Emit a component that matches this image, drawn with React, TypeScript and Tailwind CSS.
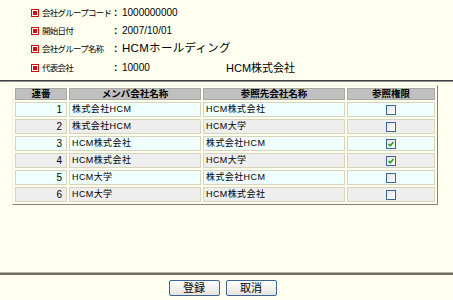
const rows = [
  { no: 1, member: "株式会社HCM", target: "HCM株式会社", checked: false },
  { no: 2, member: "株式会社HCM", target: "HCM大学", checked: false },
  { no: 3, member: "HCM株式会社", target: "株式会社HCM", checked: true },
  { no: 4, member: "HCM株式会社", target: "HCM大学", checked: true },
  { no: 5, member: "HCM大学", target: "株式会社HCM", checked: false },
  { no: 6, member: "HCM大学", target: "HCM株式会社", checked: false },
];

const Mark = () => (
  <span className="inline-flex shrink-0 items-center justify-center w-[8px] h-[8px] border border-[#d01010] bg-white mr-[3px]">
    <span className="w-[4px] h-[4px] bg-[#d01010]" />
  </span>
);

const Check = ({ checked }: { checked: boolean }) => (
  <span className="inline-flex items-center justify-center w-[10px] h-[10px] border border-[#3c6496] bg-gradient-to-br from-[#e4e4e0] to-white">
    {checked && (
      <svg width="8" height="8" viewBox="0 0 8 8">
        <path d="M1.5 4 L3.2 5.8 L6.5 2" stroke="#21a121" strokeWidth="1.6" fill="none" />
      </svg>
    )}
  </span>
);

export default function App() {
  const info = [
    { label: "会社グループコード", value: "1000000000", big: false },
    { label: "開始日付", value: "2007/10/01", big: false },
    { label: "会社グループ名称", value: "HCMホールディング", big: true },
  ];

  return (
    <div
      className="w-[453px] h-[300px] bg-[#fffff0] flex flex-col text-[10px] text-black overflow-hidden"
      style={{ fontFamily: '"Liberation Sans", "Noto Sans CJK JP", sans-serif' }}
    >
      <div className="pl-[31px] pt-[4px] h-[80px] flex flex-col leading-none">
        {info.map((i) => (
          <div key={i.label} className="flex items-center h-[18px] whitespace-nowrap">
            <Mark />
            <span className="w-[72px] text-[8.5px] tracking-[-0.75px] leading-none">{i.label}</span>
            <span className="w-[8px] font-bold leading-none">:</span>
            <span className={`leading-none ${i.big ? "text-[11.5px] tracking-[0.3px]" : ""}`}>{i.value}</span>
          </div>
        ))}
        <div className="flex items-center h-[18px] mt-[1px] whitespace-nowrap">
          <Mark />
          <span className="w-[72px] text-[8.5px] tracking-[-0.75px] leading-none">代表会社</span>
          <span className="w-[8px] font-bold leading-none">:</span>
          <span className="w-[104px] leading-none">10000</span>
          <span className="text-[11px] leading-none">HCM株式会社</span>
        </div>
      </div>
      <div className="h-[2px] bg-[#404040] border-b border-[#909090]" />
      <div className="pl-[12px] pt-[3px]">
        <table className="w-[426px] border-separate border-spacing-[2px] border border-t-[#f4f2e8] border-l-[#f4f2e8] border-r-[#808080] border-b-[#808080] leading-none text-[9px]">
          <thead>
            <tr className="h-[12px]">
              {["連番", "メンバ会社名称", "参照先会社名称", "参照権限"].map((h, idx) => (
                <th
                  key={h}
                  className={`bg-[#c0c0c0] font-bold text-[9.5px] border border-[#a8a8a0] p-0 ${
                    idx === 0 ? "w-[52px]" : idx === 1 ? "w-[132px]" : idx === 2 ? "w-[142px]" : ""
                  }`}
                >
                  {h}
                </th>
              ))}
            </tr>
          </thead>
          <tbody>
            {rows.map((r, idx) => {
              const bg = idx % 2 === 0 ? "bg-[#f0ffff]" : "bg-[#eeeeee]";
              return (
                <tr key={r.no} className="h-[15px]">
                  <td className={`${bg} border border-[#d8d4bc] text-right pr-[4px] text-[10px]`}>{r.no}</td>
                  <td className={`${bg} border border-[#d8d4bc] pl-[2px] tracking-[0.4px]`}>{r.member}</td>
                  <td className={`${bg} border border-[#d8d4bc] pl-[2px] tracking-[0.4px]`}>{r.target}</td>
                  <td className={`${bg} border border-[#d8d4bc] text-center`}>
                    <span className="inline-flex align-middle">
                      <Check checked={r.checked} />
                    </span>
                  </td>
                </tr>
              );
            })}
          </tbody>
        </table>
      </div>
      <div className="flex-1" />
      <div className="h-[3px] bg-[#707060] border-t border-[#b0b0a8]" />
      <div className="h-[25px] flex items-start justify-center gap-[6px] pt-[5px] pr-[8px]">
        {["登録", "取消"].map((b) => (
          <button
            key={b}
            className="w-[51px] h-[16px] rounded-[2px] border border-[#3c6496] bg-gradient-to-b from-white to-[#e6e4dc] text-[11px] leading-none flex items-center justify-center"
          >
            {b}
          </button>
        ))}
      </div>
    </div>
  );
}
